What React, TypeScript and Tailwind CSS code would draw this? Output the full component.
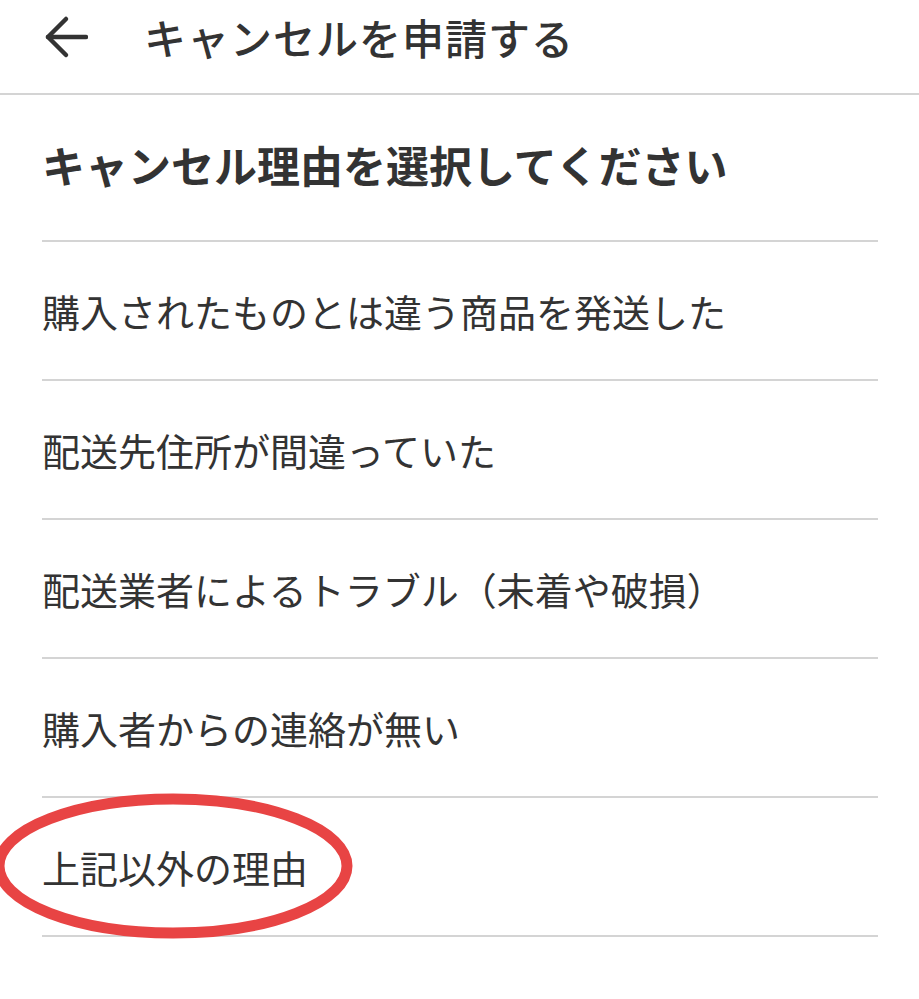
const reasons = [
  '購入されたものとは違う商品を発送した',
  '配送先住所が間違っていた',
  '配送業者によるトラブル（未着や破損）',
  '購入者からの連絡が無い',
  '上記以外の理由',
];

function BackArrow() {
  return (
    <svg width="44" height="44" viewBox="0 0 44 44" fill="none" stroke="#333333" strokeWidth="4.5" strokeLinecap="round" strokeLinejoin="round">
      <path d="M4 22h38" />
      <path d="M22 4 4 22l18 18" />
    </svg>
  );
}

export default function App() {
  return (
    <div
      className="relative w-[919px] min-h-[999px] bg-white text-[#333333]"
      style={{ fontFamily: '"Noto Sans CJK JP", "Noto Sans", sans-serif' }}
    >
      <header className="flex h-[93px] items-center pb-[20px] pl-[44px]">
        <BackArrow />
        <h1 className="ml-[56px] text-[42px] font-medium leading-none tracking-[1px]">キャンセルを申請する</h1>
      </header>
      <div className="h-[2px] bg-[#d4d4d4]" />

      <div className="px-[42px]">
        <div className="flex h-[145px] items-center pb-[6px]">
          <h2 className="text-[43px] font-bold leading-none">キャンセル理由を選択してください</h2>
        </div>
        <div className="h-[2px] w-[836px] bg-[#d4d4d4]" />

        <ul>
          {reasons.map((r) => (
            <li key={r}>
              <button className="flex h-[137px] w-full items-center text-left text-[38px] leading-none">
                {r}
              </button>
              <div className="h-[2px] w-[836px] bg-[#d4d4d4]" />
            </li>
          ))}
        </ul>
      </div>

      {/* hand-drawn highlight around the last option */}
      <svg
        className="pointer-events-none absolute left-0 top-[790px]"
        width="370"
        height="160"
        viewBox="0 0 370 160"
        fill="none"
      >
        <ellipse cx="173" cy="76" rx="174" ry="67" stroke="#e84444" strokeWidth="11" />
      </svg>
    </div>
  );
}
